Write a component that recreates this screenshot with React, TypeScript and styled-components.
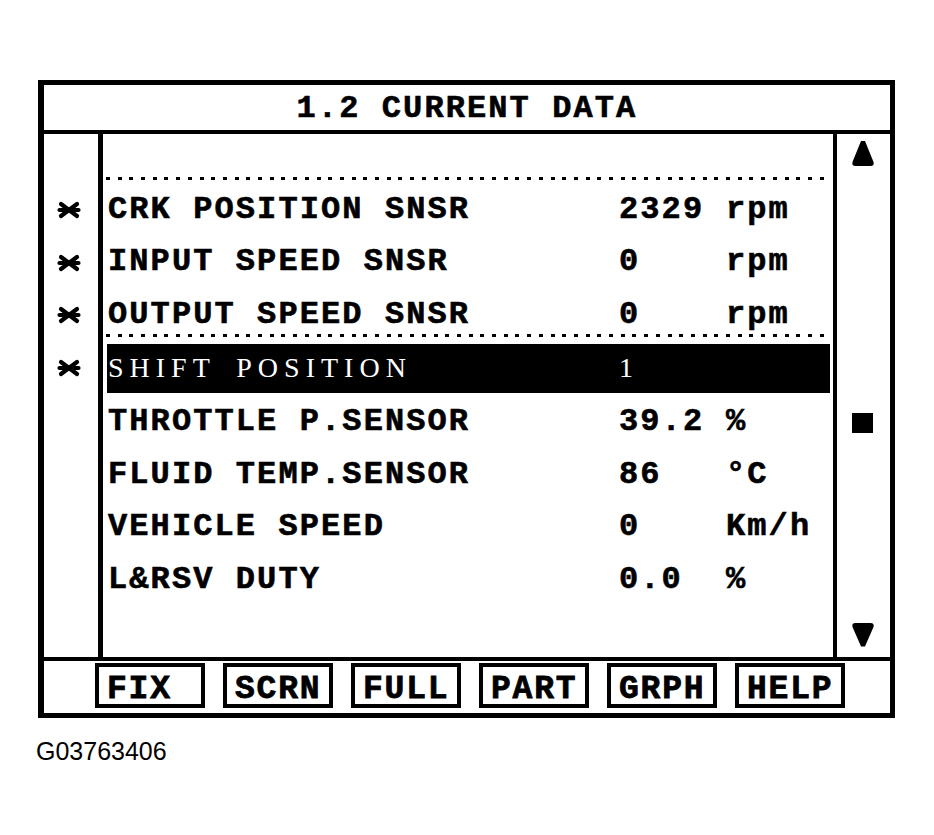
import styled, { createGlobalStyle } from 'styled-components';

const GlobalStyle = createGlobalStyle`
  body {
    margin: 0;
    background: #fff;
  }
`;

const MONO = `'Liberation Mono', 'DejaVu Sans Mono', monospace`;

interface DataRow {
  label: string;
  value: string;
  unit: string;
  marked?: boolean;
  selected?: boolean;
}

const rows: DataRow[] = [
  { label: 'CRK POSITION SNSR', value: '2329', unit: 'rpm', marked: true },
  { label: 'INPUT SPEED SNSR', value: '0', unit: 'rpm', marked: true },
  { label: 'OUTPUT SPEED SNSR', value: '0', unit: 'rpm', marked: true },
  { label: 'SHIFT POSITION', value: '1', unit: '', marked: true, selected: true },
  { label: 'THROTTLE P.SENSOR', value: '39.2', unit: '%' },
  { label: 'FLUID TEMP.SENSOR', value: '86', unit: '°C' },
  { label: 'VEHICLE SPEED', value: '0', unit: 'Km/h' },
  { label: 'L&RSV DUTY', value: '0.0', unit: '%' },
];

const buttons = ['FIX', 'SCRN', 'FULL', 'PART', 'GRPH', 'HELP'];

const Marker = () => (
  <svg width='24' height='18' viewBox='0 0 24 18'>
    <g stroke='#000' strokeWidth='4.2' strokeLinecap='round'>
      <line x1='4' y1='3' x2='20' y2='15' />
      <line x1='20' y1='3' x2='4' y2='15' />
      <line x1='2.5' y1='9' x2='21.5' y2='9' />
    </g>
  </svg>
);

const ArrowUp = () => (
  <svg width='24' height='27' viewBox='0 0 24 27'>
    <path d='M10 1 L14 1 L22.5 22 Q23.5 26 19.5 26 L4.5 26 Q0.5 26 1.5 22 Z' fill='#000' />
  </svg>
);

const ArrowDown = () => (
  <svg width='24' height='26' viewBox='0 0 24 26'>
    <path d='M4.5 1 L19.5 1 Q23.5 1 22.5 5 L14 24.5 L10 24.5 L1.5 5 Q0.5 1 4.5 1 Z' fill='#000' />
  </svg>
);

const App = () => {
  const top = rows.slice(0, 3);
  const selected = rows[3];
  const rest = rows.slice(4);

  return (
    <Page>
      <GlobalStyle />
      <Frame>
        <Header>1.2 CURRENT DATA</Header>
        <Body>
          <Gutter>
            {rows.map((r, i) => (
              <MarkerCell key={i}>{r.marked && <Marker />}</MarkerCell>
            ))}
          </Gutter>
          <List>
            <DotRule />
            {top.map((r, i) => (
              <Row
                key={r.label}
                $height={i === 2 ? 44.9 : 52.75}
                $offset={i === 0 ? 3.6 : 0}
              >
                <Label>{r.label}</Label>
                <Value>{r.value}</Value>
                <Unit>{r.unit}</Unit>
              </Row>
            ))}
            <DotRule />
            <SelectedRow>
              <Label>{selected.label}</Label>
              <Value>{selected.value}</Value>
              <Unit>{selected.unit}</Unit>
            </SelectedRow>
            {rest.map((r, i) => (
              <Row key={r.label} $height={52.75} $offset={i === 0 ? 3 : 0}>
                <Label>{r.label}</Label>
                <Value>{r.value}</Value>
                <Unit>{r.unit}</Unit>
              </Row>
            ))}
          </List>
          <ScrollColumn>
            <ArrowUp />
            <Thumb />
            <DownSlot>
              <ArrowDown />
            </DownSlot>
          </ScrollColumn>
        </Body>
        <ButtonBar>
          {buttons.map((b) => (
            <KeyButton key={b}>{b}</KeyButton>
          ))}
        </ButtonBar>
      </Frame>
      <Caption>G03763406</Caption>
    </Page>
  );
};

export default App;

const Page = styled.div`
  padding: 80px 0 0 38px;
`;

const Frame = styled.div`
  box-sizing: border-box;
  width: 857px;
  border: 5px solid #000;
  border-left-width: 6px;
  display: flex;
  flex-direction: column;
  font-family: ${MONO};
  font-weight: 700;
  font-size: 32px;
  letter-spacing: 2.1px;
  color: #000;
  -webkit-text-stroke: 0.6px #000;
`;

const Header = styled.div`
  height: 45px;
  line-height: 47px;
  border-bottom: 4px solid #000;
  text-align: center;
  white-space: pre;
`;

const Body = styled.div`
  display: flex;
  height: 523px;
  border-bottom: 4px solid #000;
`;

const Gutter = styled.div`
  box-sizing: border-box;
  width: 59px;
  border-right: 5px solid #000;
  padding-top: 49.6px;
  display: flex;
  flex-direction: column;
`;

const MarkerCell = styled.div`
  height: 52.75px;
  display: flex;
  align-items: center;
  justify-content: center;
  padding-right: 4px;
`;

const List = styled.div`
  flex: 1;
  padding-top: 43px;
  display: flex;
  flex-direction: column;
`;

const DotRule = styled.div`
  height: 3px;
  margin: 0 3px;
  flex: none;
  background-image: repeating-linear-gradient(
    90deg,
    #000 0 4px,
    transparent 4px 11.7px
  );
`;

const Row = styled.div<{ $height: number; $offset: number }>`
  flex: none;
  height: ${({ $height }) => $height}px;
  margin-top: ${({ $offset }) => $offset}px;
  line-height: 52.75px;
  padding-left: 5px;
  display: grid;
  grid-template-columns: 511px 107px 1fr;
  align-items: start;
  white-space: pre;
`;

const SelectedRow = styled.div`
  flex: none;
  height: 49px;
  margin: 7px 3px 0 4px;
  padding-left: 1px;
  background: #000;
  color: #fff;
  display: grid;
  grid-template-columns: 511px 107px 1fr;
  align-items: start;
  font-family: 'Liberation Serif', 'Times New Roman', serif;
  font-weight: 400;
  font-size: 28px;
  line-height: 47px;
  letter-spacing: 6px;
  word-spacing: 8px;
  -webkit-text-stroke: 0;
`;

const Label = styled.span``;

const Value = styled.span``;

const Unit = styled.span``;

const ScrollColumn = styled.div`
  box-sizing: border-box;
  width: 57px;
  border-left: 4px solid #000;
  padding: 6px 2px 9px 0;
  display: flex;
  flex-direction: column;
  align-items: center;
`;

const Thumb = styled.div`
  width: 21px;
  height: 20px;
  margin-top: 246px;
  background: #000;
`;

const DownSlot = styled.div`
  margin-top: auto;
  display: flex;
`;

const ButtonBar = styled.div`
  height: 50px;
  display: flex;
  gap: 18px;
  padding: 2px 0 0 51px;
`;

const KeyButton = styled.div`
  box-sizing: border-box;
  width: 110px;
  height: 45px;
  border: 4px solid #000;
  padding: 8px 0 0 8px;
  font-size: 33px;
  line-height: 29px;
  letter-spacing: 1.8px;
  -webkit-text-stroke: 0.8px #000;
`;

const Caption = styled.div`
  margin: 19px 0 0 -2px;
  font-family: 'Liberation Sans', Arial, sans-serif;
  font-size: 25px;
  color: #000;
`;
